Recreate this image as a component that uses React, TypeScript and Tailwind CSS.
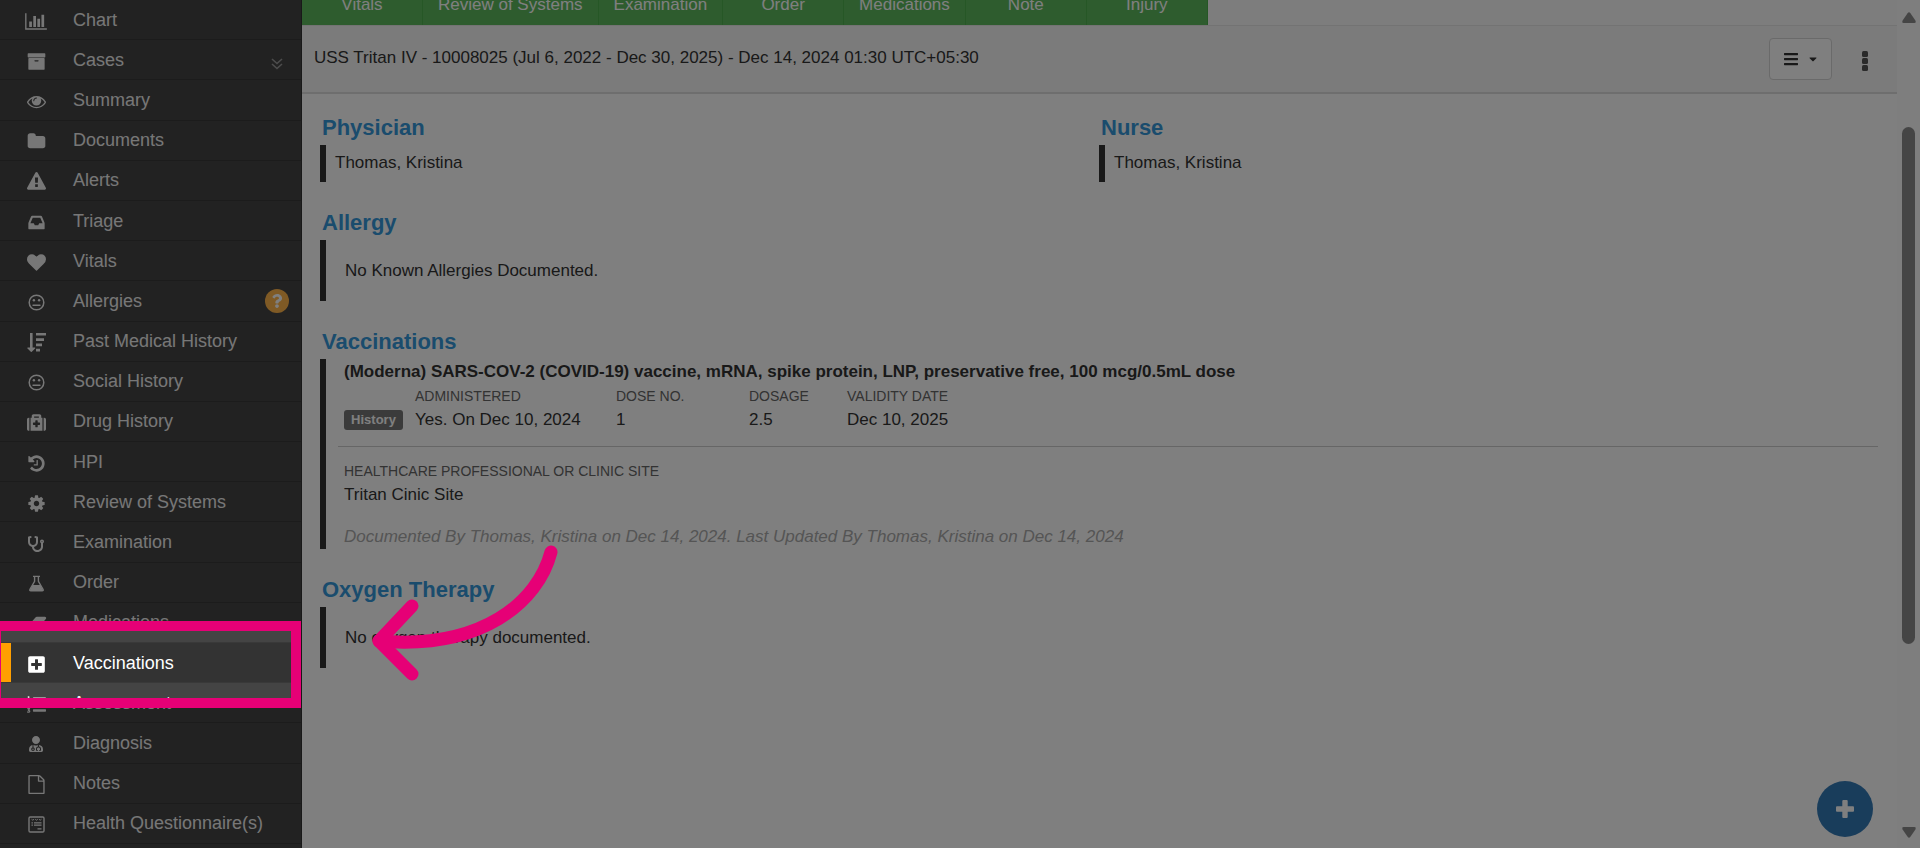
import type { ReactNode } from 'react';
import { FaBars, FaCaretDown, FaListOl, FaMedkit, FaPlusSquare, FaQuestion, FaStethoscope, FaUserMd } from 'react-icons/fa';

type TMenuItem = {
  label: string;
  icon: ReactNode;
  active?: boolean;
  extra?: ReactNode;
};

const Glyph = ({ d, wide = false }: { d: string; wide?: boolean }) => (
  <svg
    viewBox={wide ? '0 0 2048 1792' : '0 0 1792 1792'}
    className={wide ? 'h-[19px] w-[22px]' : 'size-[19px]'}
    fill="currentColor"
    aria-hidden="true"
  >
    <path d={d} />
  </svg>
);

const Meh = () => (
  <svg viewBox="0 0 19 19" className="size-[19px]" fill="none" stroke="currentColor" aria-hidden="true">
    <circle cx="9.5" cy="9.5" r="7.3" strokeWidth="1.5" />
    <path d="M6 12.2h7" strokeWidth="1.4" strokeLinecap="round" />
    <circle cx="6.9" cy="7.2" r="1.2" fill="currentColor" stroke="none" />
    <circle cx="12.1" cy="7.2" r="1.2" fill="currentColor" stroke="none" />
  </svg>
);

const SortAmount = () => (
  <svg viewBox="0 0 19 19" className="size-[19px]" fill="currentColor" aria-hidden="true">
    <path d="M3 0h2.600v14.600h2.200q.8.200.3.900l-3.300 3.300q-.5.400-1 0l-3.300-3.300q-.5-.7.300-.900H3z" />
    <path d="M9 0h10v2.600H9zM9 5.300h8v2.600H9zM9 10.600h6v2.600H9zM9 15.800h4v2.600H9z" />
  </svg>
);

const Flask = () => (
  <svg viewBox="0 0 19 19" className="size-[19px]" aria-hidden="true">
    <path
      d="M7.600 2.400v4.900L3 15.200q-.7 1.500.8 1.500h11.400q1.500 0 .8-1.500l-4.600-7.900V2.400"
      fill="none"
      stroke="currentColor"
      strokeWidth="1.400"
    />
    <path d="M6 1.700h7v1.400H6zM5.600 10.900h7.800l3 5.800H2.600z" fill="currentColor" />
  </svg>
);

const Questionnaire = () => (
  <svg viewBox="0 0 19 19" className="size-[19px]" fill="none" stroke="currentColor" aria-hidden="true">
    <rect x="2" y="2" width="15" height="15" rx="1.2" strokeWidth="1.4" />
    <path d="M4.5 4.2l1.3 1 1.3-1M8.2 4.2l1.3 1 1.3-1M11.9 4.2l1.3 1 1.3-1" strokeWidth="1" />
    <path d="M4.5 7.8h1.4M7 7.8h7.5M4.5 10.2h1.4M7 10.2h7.5M10.5 13.8h4" strokeWidth="1.3" />
  </svg>
);

const DoubleChevron = () => (
  <svg
    viewBox="0 0 12 12"
    className="mt-2 mr-[18px] size-3"
    fill="none"
    stroke="#999"
    strokeWidth="1.600"
    aria-hidden="true"
  >
    <path d="M1 1l5 4.500L11 1M1 6l5 4.500L11 6" />
  </svg>
);

const CHART =
  'M640 896v512h-256v-512h256zm384-512v1024h-256v-1024h256zm1024 1152v128h-2048v-1536h128v1408h1920zm-640-896v768h-256v-768h256zm384-384v1152h-256v-1152h256z';
const ARCHIVE =
  'M1088 832q0-26-19-45t-45-19h-256q-26 0-45 19t-19 45 19 45 45 19h256q26 0 45-19t19-45zm576-192v960q0 26-19 45t-45 19h-1408q-26 0-45-19t-19-45v-960q0-26 19-45t45-19h1408q26 0 45 19t19 45zm64-448v256q0 26-19 45t-45 19h-1536q-26 0-45-19t-19-45v-256q0-26 19-45t45-19h1536q26 0 45 19t19 45z';
const EYE =
  'M1664 960q-152-236-381-353 61 104 61 225 0 185-131.5 316.5t-316.5 131.5-316.5-131.5-131.5-316.5q0-121 61-225-229 117-381 353 133 205 333.5 326.5t434.5 121.5 434.5-121.5 333.5-326.5zm-720-384q0-20-14-34t-34-14q-125 0-214.5 89.5t-89.5 214.5q0 20 14 34t34 14 34-14 14-34q0-86 61-147t147-61q20 0 34-14t14-34zm848 384q0 34-20 69-140 230-376.5 368.5t-499.5 138.5-499.5-139-376.5-368q-20-35-20-69t20-69q140-229 376.5-368t499.5-139 499.5 139 376.5 368q20 35 20 69z';
const FOLDER =
  'M1728 608v704q0 92-66 158t-158 66h-1216q-92 0-158-66t-66-158v-960q0-92 66-158t158-66h320q92 0 158 66t66 158v32h672q92 0 158 66t66 158z';
const WARNING =
  'M1024 1375v-190q0-14-9.5-23.5t-22.5-9.5h-192q-13 0-22.5 9.5t-9.5 23.5v190q0 14 9.5 23.5t22.5 9.5h192q13 0 22.5-9.5t9.5-23.5zm-2-374l18-459q0-12-10-19-13-11-24-11h-220q-11 0-24 11-10 7-10 21l17 457q0 10 10 16.5t24 6.5h185q14 0 23.5-6.5t10.5-16.5zm-14-934l768 1408q35 63-2 126-17 29-46.5 46t-63.5 17h-1536q-34 0-63.5-17t-46.5-46q-37-63-2-126l768-1408q17-31 47-49t65-18 65 18 47 49z';
const INBOX =
  'M1151 960h316q-1-3-2.5-8t-2.5-8l-212-496h-708l-212 496q-1 2-2.5 8t-2.5 8h316l95 192h320zm513 30v482q0 26-19 45t-45 19h-1408q-26 0-45-19t-19-45v-482q0-62 25-123l238-552q10-25 36.5-42t52.5-17h832q26 0 52.5 17t36.5 42l238 552q25 61 25 123z';
const HEART =
  'M896 1664q-26 0-44-18l-624-602q-10-8-27.5-26t-55.5-65.5-68-97.5-53.5-121-23.5-138q0-220 127-344t351-124q62 0 126.5 21.5t120 58 95.5 68.5 76 68q36-36 76-68t95.5-68.5 120-58 126.5-21.5q224 0 351 124t127 344q0 221-229 450l-623 600q-18 18-44 18z';
const HISTORY =
  'M1664 896q0 156-61 298t-164 245-245 164-298 61q-172 0-327-72.5t-264-204.5q-7-10-6.5-22.5t8.5-20.5l137-138q10-9 25-9 16 2 23 12 73 95 179 147t225 52q104 0 198.5-40.5t163.5-109.5 109.5-163.5 40.5-198.5-40.5-198.5-109.5-163.5-163.5-109.5-198.5-40.5q-98 0-188 35.5t-160 101.5l137 138q31 30 14 69-17 40-59 40h-448q-26 0-45-19t-19-45v-448q0-42 40-59 39-17 69 14l130 129q107-101 244.5-156.5t284.5-55.5q156 0 298 61t245 164 164 245 61 298zm-640-288v448q0 14-9 23t-23 9h-320q-14 0-23-9t-9-23v-64q0-14 9-23t23-9h224v-352q0-14 9-23t23-9h64q14 0 23 9t9 23z';
const GEAR =
  'M1152 896q0-106-75-181t-181-75-181 75-75 181 75 181 181 75 181-75 75-181zm512-109v222q0 12-8 23t-20 13l-185 28q-19 54-39 91 35 50 107 138 10 12 10 25t-9 23q-27 37-99 108t-94 71q-12 0-26-9l-138-108q-44 23-91 38-16 136-29 186-7 28-36 28h-222q-14 0-24.5-8.5t-11.5-21.5l-28-184q-49-16-90-37l-141 107q-10 9-25 9-14 0-25-11-126-114-165-168-7-10-7-23 0-12 8-23 15-21 51-66.5t54-70.5q-27-50-41-99l-183-27q-13-2-21-12.5t-8-23.5v-222q0-12 8-23t19-13l186-28q14-46 39-92-40-57-107-138-10-12-10-24 0-10 9-23 26-36 98.5-107.5t94.5-71.5q13 0 26 10l138 107q44-23 91-38 16-136 29-186 7-28 36-28h222q14 0 24.5 8.5t11.5 21.5l28 184q49 16 90 37l142-107q9-9 24-9 13 0 25 10 129 119 165 170 7 8 7 22 0 12-8 23-15 21-51 66.5t-54 70.5q26 50 41 98l183 28q13 2 21 12.5t8 23.5z';
const ERASER =
  'M960 1408l336-384h-768l-336 384h768zm1013-1077q15 34 9.5 71.5t-30.5 65.5l-896 1024q-38 44-96 44h-768q-38 0-69.5-20.5t-47.5-54.5q-15-34-9.5-71.5t30.5-65.5l896-1024q38-44 96-44h768q38 0 69.5 20.5t47.5 54.5z';
const FILE =
  'M1596 380q28 28 48 76t20 88v1152q0 40-28 68t-68 28h-1344q-40 0-68-28t-28-68v-1600q0-40 28-68t68-28h896q40 0 88 20t76 48zm-444-244v376h376q-10-29-22-41l-313-313q-12-12-41-22zm384 1528v-1024h-416q-40 0-68-28t-28-68v-416h-768v1536h1280z';

const menu: TMenuItem[] = [
  { label: 'Chart', icon: <Glyph d={CHART} wide /> },
  { label: 'Cases', icon: <Glyph d={ARCHIVE} />, extra: <DoubleChevron /> },
  { label: 'Summary', icon: <Glyph d={EYE} /> },
  { label: 'Documents', icon: <Glyph d={FOLDER} /> },
  { label: 'Alerts', icon: <Glyph d={WARNING} /> },
  { label: 'Triage', icon: <Glyph d={INBOX} /> },
  { label: 'Vitals', icon: <Glyph d={HEART} /> },
  {
    label: 'Allergies',
    icon: <Meh />,
    extra: (
      <span className="mr-3 flex size-6 items-center justify-center rounded-full bg-[#ffb44a] text-white">
        <FaQuestion className="size-3.5" />
      </span>
    ),
  },
  { label: 'Past Medical History', icon: <SortAmount /> },
  { label: 'Social History', icon: <Meh /> },
  { label: 'Drug History', icon: <FaMedkit className="size-[19px]" /> },
  { label: 'HPI', icon: <Glyph d={HISTORY} /> },
  { label: 'Review of Systems', icon: <Glyph d={GEAR} /> },
  { label: 'Examination', icon: <FaStethoscope className="size-4" /> },
  { label: 'Order', icon: <Flask /> },
  { label: 'Medications', icon: <Glyph d={ERASER} wide /> },
  { label: 'Vaccinations', icon: <FaPlusSquare className="size-[19px]" />, active: true },
  { label: 'Assessment', icon: <FaListOl className="size-[19px]" /> },
  { label: 'Diagnosis', icon: <FaUserMd className="size-4" /> },
  { label: 'Notes', icon: <Glyph d={FILE} /> },
  { label: 'Health Questionnaire(s)', icon: <Questionnaire /> },
];

const tabs = ['Vitals', 'Review of Systems', 'Examination', 'Order', 'Medications', 'Note', 'Injury'];

const Sidebar = () => (
  <nav className="w-[302px] shrink-0 border-r border-[#333] bg-[#444] pb-1">
    <ul className="flex h-full flex-col">
      {menu.map(({ label, icon, active, extra }) => (
        <li key={label} className="flex-1 border-b border-[#393939]">
          <a
            href="#"
            className={
              active
                ? 'flex h-full items-center border-l-[11px] border-[#ff9f00] bg-[#333] text-white'
                : 'flex h-full items-center border-l-[11px] border-transparent text-[#eee]'
            }
          >
            <span className="flex w-[50px] justify-center pt-[3px]">{icon}</span>
            <span className="ml-3 flex-1 text-[18px] leading-6">{label}</span>
            {extra}
          </a>
        </li>
      ))}
    </ul>
  </nav>
);

const Panel = ({ title, className = '', children }: { title: string; className?: string; children: ReactNode }) => (
  <section>
    <h2 className="mb-1 pl-0.5 text-[22px] leading-[26px] font-bold text-[#3498db]">{title}</h2>
    <div className={`border-l-[6px] border-[#333] ${className}`}>{children}</div>
  </section>
);

const Field = ({ label, value }: { label: string; value: string }) => (
  <div>
    <div className="text-[14px] leading-5 text-[#666] uppercase">{label}</div>
    <div className="mt-px">{value}</div>
  </div>
);

const Toolbar = () => (
  <header className="flex items-start justify-between border-b-2 border-[#dcdcdc] bg-[#f6f6f6] py-3 pr-[18px] pl-3">
    <p className="mt-[7px]">
      USS Tritan IV - 10008025 (Jul 6, 2022 - Dec 30, 2025) - Dec 14, 2024 01:30 UTC+05:30
    </p>
    <div className="flex items-center gap-[19px]">
      <button
        aria-label="View options"
        className="flex h-[42px] w-[63px] items-center justify-center gap-2 rounded border border-[#d4d4d4] bg-white"
      >
        <FaBars className="size-4" />
        <FaCaretDown className="size-3" />
      </button>
      <button aria-label="More actions" className="flex w-7 justify-center pt-1">
        <svg viewBox="0 0 6 20" className="h-5 w-1.5" fill="#555" aria-hidden="true">
          <rect width="6" height="6" rx="1.5" />
          <rect y="7" width="6" height="6" rx="1.5" />
          <rect y="14" width="6" height="6" rx="1.5" />
        </svg>
      </button>
    </div>
  </header>
);

const Scrollbar = () => (
  <div className="flex w-[23px] shrink-0 flex-col items-center bg-[#fcfcfc] pt-3 pb-[10px]">
    <svg viewBox="0 0 14 11" className="h-[11px] w-3.5" fill="#8b8b8b" aria-hidden="true">
      <path d="M5.6 1.2q1.4-2 2.8 0l5 7.4q1 2.4-1 2.4H1.6q-2 0-1-2.4z" />
    </svg>
    <div className="mt-[104px] mb-[183px] w-[13px] flex-1 rounded-full bg-[#8b8b8b]" />
    <svg viewBox="0 0 14 11" className="h-[11px] w-3.5 rotate-180" fill="#8b8b8b" aria-hidden="true">
      <path d="M5.6 1.2q1.4-2 2.8 0l5 7.4q1 2.4-1 2.4H1.6q-2 0-1-2.4z" />
    </svg>
  </div>
);

const App = () => (
  <div className="relative flex h-screen overflow-hidden bg-white font-['Liberation_Sans',Arial,sans-serif] text-[17px] leading-[25px] text-[#333]">
    <Sidebar />

    <main className="min-w-0 flex-1">
      <div className="flex h-[26px] items-end overflow-hidden border-b border-[#e7e7e7] bg-[#fafafa]">
        {tabs.map((tab) => (
          <button
            key={tab}
            className="min-w-[121px] shrink-0 border-r border-[#4cae4c] bg-[#5cb85c] px-[15px] pb-2 text-white"
          >
            {tab}
          </button>
        ))}
      </div>
      <Toolbar />

      <div className="flex flex-col gap-7 pt-[21px] pr-[19px] pl-[18px]">
        <div className="grid grid-cols-2">
          <Panel title="Physician" className="pt-[5px] pb-[7px] pl-[9px]">
            Thomas, Kristina
          </Panel>
          <Panel title="Nurse" className="pt-[5px] pb-[7px] pl-[9px]">
            Thomas, Kristina
          </Panel>
        </div>

        <Panel title="Allergy" className="py-[18px] pl-[19px]">
          No Known Allergies Documented.
        </Panel>

        <Panel title="Vaccinations" className="pl-3">
          <div className="pl-1.5">
            <h3 className="font-bold">
              (Moderna) SARS-COV-2 (COVID-19) vaccine, mRNA, spike protein, LNP, preservative free, 100 mcg/0.5mL dose
            </h3>
            <div className="mt-0.5 flex items-end">
              <span className="mr-3 mb-0.5 w-[59px] rounded-[3px] bg-[#777] text-center text-[13px] leading-5 font-bold text-white">
                History
              </span>
              <div className="w-[201px]">
                <Field label="Administered" value="Yes. On Dec 10, 2024" />
              </div>
              <div className="w-[133px]">
                <Field label="Dose No." value="1" />
              </div>
              <div className="w-[98px]">
                <Field label="Dosage" value="2.5" />
              </div>
              <Field label="Validity Date" value="Dec 10, 2025" />
            </div>
          </div>
          <hr className="my-3.5 border-[#ccc]" />
          <div className="pl-1.5">
            <Field label="Healthcare Professional or Clinic Site" value="Tritan Cinic Site" />
            <p className="mt-[17px] text-[#aaa] italic">
              Documented By Thomas, Kristina on Dec 14, 2024. Last Updated By Thomas, Kristina on Dec 14, 2024
            </p>
          </div>
        </Panel>

        <Panel title="Oxygen Therapy" className="py-[18px] pl-[19px]">
          No oxygen therapy documented.
        </Panel>
      </div>
    </main>

    <Scrollbar />

    <button
      aria-label="Add"
      className="absolute right-[47px] bottom-[11px] flex size-14 items-center justify-center rounded-full bg-[#337ab7] text-white"
    >
      <svg viewBox="0 0 18 18" className="size-[18px]" fill="currentColor" aria-hidden="true">
        <rect x="6.300" width="5.400" height="18" rx="1" />
        <rect y="6.300" width="18" height="5.400" rx="1" />
      </svg>
    </button>

    {/* tour spotlight: the shadow dims everything outside the frame */}
    <div className="pointer-events-none absolute top-[621px] left-[-9px] h-[87px] w-[310px] border-[10px] border-[#e60076] shadow-[0_0_0_2000px_rgba(0,0,0,0.5)]" />
    <svg
      viewBox="0 0 190 140"
      className="pointer-events-none absolute top-[543px] left-[370px] h-[140px] w-[190px]"
      fill="none"
      stroke="#e60076"
      strokeWidth="13"
      strokeLinecap="round"
      strokeLinejoin="round"
      aria-hidden="true"
    >
      <path d="M181 9C168 59 112 107 9 98" />
      <path d="M42 63L9 98L42 131" />
    </svg>
  </div>
);

export default App;
